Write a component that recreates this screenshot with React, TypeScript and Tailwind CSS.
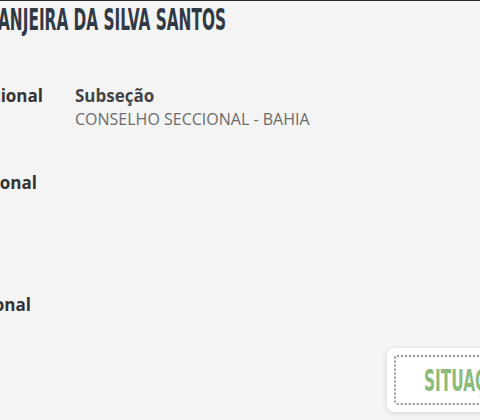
export default function App() {
  const sans = { fontFamily: '"Open Sans", "Liberation Sans", sans-serif' };
  const cond = { fontFamily: '"DejaVu Sans Condensed", "Liberation Sans Narrow", sans-serif' };

  return (
    <div className="w-[480px] h-[420px] overflow-hidden bg-[#f4f4f4] border-t border-[#2a2a2a] relative" style={sans}>
      {/* title, cut at the left edge */}
      <div className="h-[36px] pt-[1px] whitespace-nowrap">
        <h1
          className="inline-block origin-left scale-x-[0.55] -ml-[2px] text-[31px] leading-[35px] font-bold text-[#313945]"
          style={cond}
        >
          ANJEIRA DA SILVA SANTOS
        </h1>
      </div>

      <div className="mt-[47px] flex flex-col">
        <div className="flex items-start">
          <div className="w-[43px] shrink-0 flex justify-end whitespace-nowrap text-[17px] leading-[24px] font-bold text-[#333]">
            Seccional
          </div>
          <div className="ml-[32px]">
            <div className="text-[17px] leading-[24px] font-bold text-[#444]">Subseção</div>
            <div className="text-[16px] leading-[22px] text-[#6b6b6b]">CONSELHO SECCIONAL - BAHIA</div>
          </div>
        </div>

        <div className="mt-[41px] w-[37px] flex justify-end whitespace-nowrap text-[17px] leading-[24px] font-bold text-[#333]">
          Regional
        </div>
        <div className="mt-[98px] w-[31px] flex justify-end whitespace-nowrap text-[17px] leading-[24px] font-bold text-[#333]">
          Nacional
        </div>
      </div>

      {/* status badge, cut at the right edge */}
      <div className="absolute left-[387px] top-[347px] w-[200px] h-[64px] bg-white rounded-[7px] shadow-[0_1px_5px_rgba(0,0,0,0.14)] p-[7px]">
        <div className="h-full border-[2px] border-dotted border-[#8f9a8f] rounded-[3px] flex items-center pl-[28px]">
          <span
            className="inline-block origin-left scale-x-[0.55] text-[31px] leading-none font-bold text-[#8cbb7c] whitespace-nowrap"
            style={cond}
          >
            SITUAÇÃO
          </span>
        </div>
      </div>
    </div>
  );
}
